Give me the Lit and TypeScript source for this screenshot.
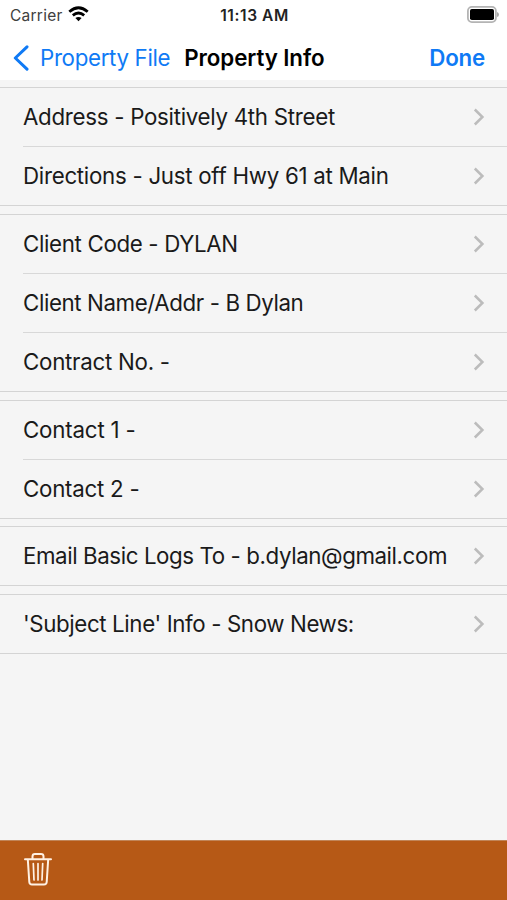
import { LitElement, html, css } from "lit";
import { customElement } from "lit/decorators.js";

interface Row {
  text: string;
  tracking: number;
}

const SECTIONS: Row[][] = [
  [
    { text: "Address - Positively 4th Street", tracking: -0.29 },
    { text: "Directions - Just off Hwy 61 at Main", tracking: -0.28 },
  ],
  [
    { text: "Client Code - DYLAN", tracking: -0.34 },
    { text: "Client Name/Addr - B Dylan", tracking: -0.4 },
    { text: "Contract No. -", tracking: -0.26 },
  ],
  [
    { text: "Contact 1 -", tracking: -0.18 },
    { text: "Contact 2 -", tracking: -0.25 },
  ],
  [{ text: "Email Basic Logs To - b.dylan@gmail.com", tracking: -0.41 }],
  [{ text: "'Subject Line' Info - Snow News:", tracking: -0.38 }],
];

@customElement("app-root")
export class AppRoot extends LitElement {
  static styles = css`
    :host {
      display: flex;
      flex-direction: column;
      height: 900px;
      width: 100%;
      overflow: hidden;
      background: #f5f5f5;
      color: #1a1a1a;
      font-family: Inter, "Liberation Sans", sans-serif;
      white-space: nowrap;
    }
    svg { display: block; flex: none; }
    .status {
      display: grid;
      grid-template-columns: 1fr auto 1fr;
      align-items: center;
      height: 30px;
      padding: 0 8px 0 10px;
      background: #fff;
      font-size: 15.5px;
    }
    .carrier { display: flex; align-items: center; gap: 5px; color: #404040; letter-spacing: 0.25px; }
    .carrier svg { margin-top: -2px; }
    .time { font-weight: 600; color: #222; letter-spacing: 0.6px; }
    .battery { justify-self: end; margin-top: -2px; }
    .nav {
      display: flex;
      align-items: center;
      height: 50px;
      padding: 0 22px 0 13px;
      background: #fff;
      font-size: 22.3px;
    }
    .back { display: flex; align-items: center; gap: 11px; color: #0f7af5; }
    .label, .title, .done { padding-top: 4px; }
    .label { letter-spacing: -0.33px; }
    .back svg { margin-top: 5px; }
    .title { margin-left: 14px; font-weight: 600; color: #000; letter-spacing: -0.08px; }
    .done { margin-left: auto; font-weight: 600; color: #0f7af5; letter-spacing: -0.2px; }
    .list { flex: 1; padding-top: 7px; }
    .section {
      border-top: 1px solid #d4d4d4;
      border-bottom: 1px solid #d4d4d4;
      margin-bottom: 7.4px;
    }
    .row { display: flex; height: 59.2px; padding-left: 23px; box-sizing: border-box; }
    .row:first-child { height: 58.1px; }
    .cell {
      flex: 1;
      display: flex;
      align-items: center;
      justify-content: space-between;
      padding-right: 22px;
      font-size: 22.3px;
    }
    .text { padding-bottom: 1px; }
    .row + .row .cell { border-top: 1px solid #d8d8d8; }
    .toolbar {
      height: 60px;
      box-sizing: border-box;
      padding: 12px 24px;
      border-top: 1px solid #c18558;
      background: #b65916;
    }
  `;

  private chevron() {
    return html`<svg width="12" height="18" viewBox="0 0 12 18" fill="none" stroke="#bcbcbc" stroke-width="2.5">
      <path d="M1.8 1.5 9.4 9 1.8 16.5" />
    </svg>`;
  }

  render() {
    return html`
      <div class="status">
        <div class="carrier">
          <span>Carrier</span>
          <svg width="21" height="16" viewBox="0 0 21 16" fill="none" stroke="#000" stroke-width="2.8">
            <path d="M1.3 5.8Q10.5-2.2 19.7 5.8" />
            <path d="M4.8 9.4Q10.5 4.6 16.2 9.4" />
            <path d="M10.5 15.2 7.4 12.1Q10.5 9.8 13.6 12.1Z" fill="#000" stroke="none" />
          </svg>
        </div>
        <div class="time">11:13 AM</div>
        <svg class="battery" width="33" height="17" viewBox="0 0 33 17">
          <rect x="1.9" y=".9" width="28" height="15.2" rx="4" fill="#fff" stroke="#b4b4b4" stroke-width="1.8" />
          <rect x="4" y="3" width="24" height="11" rx="1.8" fill="#000" />
          <path d="M31 6q2 .5 2 2.5t-2 2.5z" fill="#aaa" />
        </svg>
      </div>
      <div class="nav">
        <div class="back">
          <svg width="16" height="26" viewBox="0 0 16 26" fill="none" stroke="#0f7af5" stroke-width="3" stroke-linecap="round" stroke-linejoin="round">
            <path d="M14 1.8 2.3 13 14 24.2" />
          </svg>
          <span class="label">Property File</span>
        </div>
        <span class="title">Property Info</span>
        <span class="done">Done</span>
      </div>
      <div class="list">
        ${SECTIONS.map(
          (rows) => html`<div class="section">
            ${rows.map(
              (r) => html`<div class="row">
                <div class="cell">
                  <span class="text" style="letter-spacing: ${r.tracking}px">${r.text}</span>
                  ${this.chevron()}
                </div>
              </div>`
            )}
          </div>`
        )}
      </div>
      <div class="toolbar">
        <svg width="28" height="34" viewBox="0 0 28 34" fill="none" stroke="#fff1e4" stroke-width="2" stroke-linecap="round" stroke-linejoin="round">
          <path d="M1 6.2H27M8.5 6.2V3.4Q8.5 1 11 1H17Q19.5 1 19.5 3.4V6.2M3.8 6.2 5.3 29Q5.5 31.5 8 31.5H20Q22.5 31.5 22.7 29L24.2 6.2" />
          <path d="M9.3 10.5 10 27M14 10.5V27M18.7 10.5 18 27" stroke-width="1.7" />
        </svg>
      </div>
    `;
  }
}
